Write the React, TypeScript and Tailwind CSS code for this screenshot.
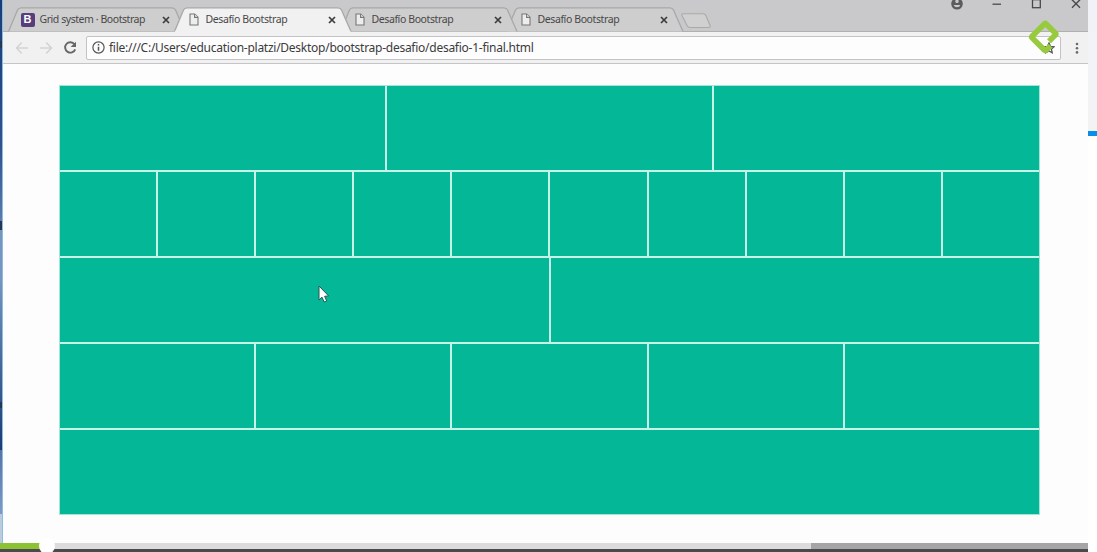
import React from "react";

const ROWS = [3, 10, 2, 5, 1];

const TABS = [
  { title: "Grid system · Bootstrap", active: false, brand: true, layer: "z-[5]" },
  { title: "Desafío Bootstrap", active: true, brand: false, layer: "z-10" },
  { title: "Desafío Bootstrap", active: false, brand: false, layer: "z-[4]" },
  { title: "Desafío Bootstrap", active: false, brand: false, layer: "z-[3]" },
];

type TabProps = { title: string; active: boolean; brand: boolean; layer: string };

function PageIcon() {
  return (
    <svg width="10" height="13" viewBox="0 0 10 13" fill="#ededed" stroke="#777" strokeWidth="1.1">
      <path d="M1 1h4.7L9 4.3V12H1z" />
      <path d="M5.6 1v3.4H9" />
    </svg>
  );
}

function Tab({ title, active, brand, layer }: TabProps) {
  return (
    <div className={`relative flex h-[25px] w-[166px] shrink-0 items-center ${layer}`}>
      <svg className="absolute left-0 top-0" width="180" height="25" viewBox="0 0 180 25">
        <path
          d="M.5 24.5 L9.5 3 Q10.5 .8 13 .8 H164 Q166.5 .8 167.5 3 L177 24.5"
          fill={active ? "#f1f1f2" : "#cecece"}
          stroke="#a8a8a8"
          strokeWidth="1.3"
        />
        {active && <path d="M1 24.5H176.5" stroke="#f1f1f2" strokeWidth="1.5" />}
      </svg>
      <div className="relative flex h-full w-full items-center">
        {brand ? (
          <span className="ml-[13px] mr-[5px] flex h-[14px] w-[14px] items-center justify-center rounded-[2px] bg-[#563d7c] font-['Liberation_Sans',sans-serif] text-[11px] font-bold leading-none text-white">
            B
          </span>
        ) : (
          <span className="ml-[15px] mr-[7px] w-[10px]">
            <PageIcon />
          </span>
        )}
        <span
          className={`w-[120px] whitespace-nowrap text-[10.5px] leading-none text-[#484848] ${
            brand ? "tracking-[-0.44px]" : "tracking-[-0.4px]"
          }`}
        >
          {title}
        </span>
        <svg className="absolute left-[154px] top-[9px]" width="8" height="8" viewBox="0 0 8 8">
          <path d="M1 1l6 6M7 1L1 7" stroke="#3c3c3c" strokeWidth="1.7" />
        </svg>
      </div>
    </div>
  );
}

function WindowControls() {
  return (
    <svg className="absolute right-0 top-0" width="148" height="14" viewBox="0 0 148 14" fill="none" stroke="#484848" strokeWidth="1.3">
      <circle cx="17" cy="3.8" r="5.8" fill="#5b5b5b" stroke="none" />
      <circle cx="17" cy="1.4" r="1.7" fill="#c9c9cb" stroke="none" />
      <path d="M13.6 5h6.8q-.8 2.2-3.4 2.2t-3.4-2.2" fill="#c9c9cb" stroke="none" />
      <path d="M52.5 4.2h8.5" />
      <rect x="92.5" y="-.3" width="7.8" height="8" />
      <path d="M132 -.3l8 8M140 -.3l-8 8" />
    </svg>
  );
}

function TabStrip() {
  return (
    <div className="relative flex h-8 shrink-0 border-b border-[#b0b0b0] bg-[#c9c9cb] pl-[4.5px] pt-[7px]">
      {TABS.map((t, i) => (
        <Tab key={i} {...t} />
      ))}
      <svg className="ml-[8.5px] mt-[5px]" width="34" height="18" viewBox="0 0 34 18">
        <path d="M3 1.7h20q2 0 3 2l4 9.5q1 2.3-1.5 2.3H10q-2 0-3-2L2 3.5q-.7-1.8 1-1.8z" fill="#d0d0d0" stroke="#aaa" strokeWidth="1.1" />
      </svg>
      <WindowControls />
    </div>
  );
}

function Toolbar() {
  return (
    <div className="flex h-8 shrink-0 items-center border-b border-[#c5c5c8] bg-[#f1f1f2]">
      <svg width="83" height="31" viewBox="3 32 83 31" fill="none" strokeWidth="1.5">
        <path d="M28 48H17M21.8 42.5L16.5 48l5.3 5.5M40 48h11M46.2 42.5L51.5 48l-5.3 5.5" stroke="#d3d3d7" />
        <path d="M74.5 44.3a5.2 5.2 0 1 0 .7 5" stroke="#666" strokeWidth="1.9" />
        <path d="M76 41.7v5.4h-5.4z" fill="#666" />
      </svg>
      <div className="flex h-6 w-[975px] items-center rounded-[2px] border border-[#c3c3c6] bg-[#fefdfe] pl-[5px]">
        <svg width="13" height="13" viewBox="0 0 13 13" fill="none" stroke="#555">
          <circle cx="6.5" cy="6.5" r="5.6" strokeWidth="1.2" />
          <path d="M6.5 5.7v4M6.5 3v1.5" strokeWidth="1.5" />
        </svg>
        <span className="ml-[4px] whitespace-nowrap text-[12px] leading-none tracking-[-0.26px] text-[#3b3b3b]">
          file:///C:/Users/education-platzi/Desktop/bootstrap-desafio/desafio-1-final.html
        </span>
        <svg className="ml-auto mr-[5px]" width="12" height="12" viewBox="0 0 12 12" fill="none" stroke="#555" strokeWidth="1.3">
          <path d="M6 1l1.5 3.3 3.6.4-2.7 2.4.8 3.6L6 8.9l-3.2 1.8.8-3.6L.9 4.7l3.6-.4z" />
        </svg>
      </div>
      <svg className="ml-[14px]" width="4" height="14" viewBox="0 0 4 14" fill="#6b6b6b">
        <circle cx="2" cy="3" r="1.3" />
        <circle cx="2" cy="7.2" r="1.3" />
        <circle cx="2" cy="11.4" r="1.3" />
      </svg>
    </div>
  );
}

function BlockGrid() {
  return (
    <div className="ml-14 mt-[21px] flex h-[430px] w-[981px] flex-col gap-[2px] border border-[#a3e5d7] bg-[#c5f3e9]">
      {ROWS.map((count, r) => (
        <div key={r} className="flex h-[84px] gap-[2px]">
          {Array.from({ length: count }, (_, c) => (
            <div key={c} className="flex-1 bg-[#03b797]" />
          ))}
        </div>
      ))}
    </div>
  );
}

export default function App() {
  return (
    <div className="relative flex h-[552px] w-[1097px] overflow-hidden bg-white font-['Noto_Sans','Open_Sans',sans-serif]">
      <div className="flex w-[1088px] flex-col">
        <div className="flex h-[543px]">
          <div className="flex w-[3px] flex-col border-r border-[#8abde2]">
            <div className="h-[145px] bg-linear-to-b from-[#173d79] to-[#30528f]" />
            <div className="h-[80px] bg-linear-to-b from-[#30528f] to-[#5d7eae]" />
            <div className="h-[55px] bg-[#7595bf]" />
            <div className="h-[170px] bg-linear-to-b from-[#7595bf] to-[#1a3c77]" />
            <div className="h-[64px] bg-linear-to-b from-[#5873aa] to-[#8098c5]" />
            <div className="flex-1 bg-[#bccbdc]" />
          </div>
          <div className="flex flex-1 flex-col bg-[#fefdfe]">
            <TabStrip />
            <Toolbar />
            <BlockGrid />
          </div>
        </div>
        <div className="flex h-[6px]">
          <div className="w-[47px] bg-[#8bc334]" />
          <div className="w-[764px] bg-[#dcdcdc]" />
          <div className="flex-1 bg-[#a5a5a5]" />
        </div>
        <div className="h-[3px] bg-[#4a4a4a]" />
      </div>
      <div className="flex flex-1 flex-col">
        <div className="h-[131px] bg-linear-to-b from-[#f0f2f7] to-[#f3f3f4]" />
        <div className="h-[5px] bg-[#098fe8]" />
      </div>
      <div className="absolute left-[39px] top-[538px] h-4 w-4 rounded-full bg-white" />
      <div className="absolute left-0 top-[41px] h-[7px] w-[2px] bg-[#26374f]" />
      <div className="absolute left-0 top-[221px] h-[9px] w-[2px] bg-[#26374f]" />
      <div className="absolute left-0 top-[402px] h-[6px] w-[2px] bg-[#26374f]" />
      <svg className="absolute left-[1025px] top-[16px]" width="38" height="42" viewBox="1025 16 38 42" fill="none">
        <path
          d="M1049 41.2L1055.5 34.8Q1056.2 34 1055.5 33.2L1046.2 23.9Q1045.3 23.1 1044.4 23.9L1032.1 36.2Q1031.3 37 1032.1 37.8L1044.3 50Q1045.2 50.8 1046.2 50L1050.6 45.8"
          stroke="#98ca3f"
          strokeWidth="5.6"
          strokeLinecap="butt"
          strokeLinejoin="round"
        />
      </svg>
      <svg className="absolute left-[317px] top-[285px]" width="14" height="19" viewBox="0 0 14 19">
        <path d="M2 1v14l3-2.8 2.2 4.8 2.5-1.1-2.1-4.6 4-.4z" fill="#fff" stroke="#28584f" strokeWidth="1" />
      </svg>
    </div>
  );
}
